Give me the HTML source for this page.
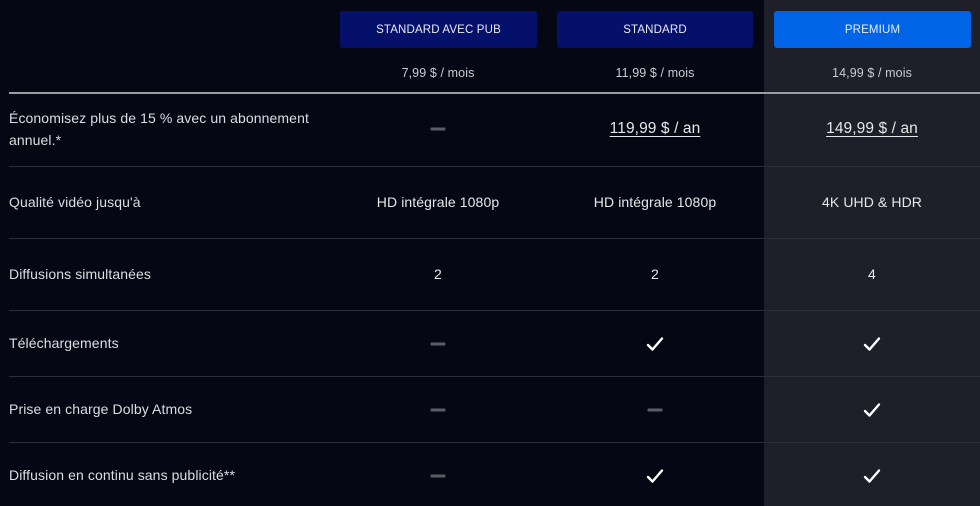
<!DOCTYPE html>
<html><head><meta charset="utf-8"><style>
*{margin:0;padding:0;box-sizing:border-box}
body{width:980px;height:506px;background:#050814;font-family:"Liberation Sans",sans-serif;color:#e6e7ea;position:relative;overflow:hidden}
.prem{position:absolute;left:764px;top:0;width:216px;height:506px;background:#1e1f28}
.btn{position:absolute;top:11px;height:37px;border-radius:3px;background:#04106a;color:#e8eaf5;font-size:11.5px;letter-spacing:.15px;display:flex;align-items:center;justify-content:center;padding-top:1px}
.t{position:absolute;transform:translate(-50%,-50%);font-size:14px;white-space:nowrap;letter-spacing:.1px}
.l{position:absolute;left:9px;font-size:14px;line-height:22px;color:#dcdde2;letter-spacing:.1px}
.hl{position:absolute;left:9px;right:0;height:1px;background:#2b2d38}
.d{position:absolute;width:15px;height:3px;background:#5a5c66;border-radius:1px;transform:translate(-50%,-50%)}
.c{position:absolute;transform:translate(-50%,-50%)}
u{text-underline-offset:3px}
</style></head><body>
<div class="prem"></div>
<div class="btn" style="left:340px;width:197px">STANDARD AVEC PUB</div>
<div class="btn" style="left:557px;width:196px">STANDARD</div>
<div class="btn" style="left:774px;width:197px;background:#0064e6">PREMIUM</div>
<div class="t" style="left:438px;top:73px;font-size:12.5px;color:#c9cbd1">7,99 $ / mois</div>
<div class="t" style="left:655px;top:73px;font-size:12.5px;color:#c9cbd1">11,99 $ / mois</div>
<div class="t" style="left:872px;top:73px;font-size:12.5px;color:#c9cbd1">14,99 $ / mois</div>
<div class="hl" style="top:92px;height:2px;background:#9a9ca4"></div>
<div class="l" style="top:107px">Économisez plus de 15 % avec un abonnement<br>annuel.*</div>
<div class="d" style="left:438px;top:129px"></div>
<div class="t" style="left:655px;top:129px;font-size:15.5px"><u>119,99 $ / an</u></div>
<div class="t" style="left:872px;top:129px;font-size:15.5px"><u>149,99 $ / an</u></div>
<div class="hl" style="top:166px"></div>
<div class="l" style="top:191px">Qualité vidéo jusqu'à</div>
<div class="t" style="left:438px;top:202px">HD intégrale 1080p</div>
<div class="t" style="left:655px;top:202px">HD intégrale 1080p</div>
<div class="t" style="left:872px;top:202px">4K UHD &amp; HDR</div>
<div class="hl" style="top:238px"></div>
<div class="l" style="top:263px">Diffusions simultanées</div>
<div class="t" style="left:438px;top:274px">2</div>
<div class="t" style="left:655px;top:274px">2</div>
<div class="t" style="left:872px;top:274px">4</div>
<div class="hl" style="top:310px"></div>
<div class="l" style="top:332px">Téléchargements</div>
<div class="d" style="left:438px;top:344px"></div>
<svg class="c" style="left:655px;top:344px" width="18" height="16" viewBox="0 0 18 16"><path d="M2 9l4.5 4.5L16 2.5" fill="none" stroke="#fff" stroke-width="2.4" stroke-linecap="round" stroke-linejoin="round"/></svg>
<svg class="c" style="left:872px;top:344px" width="18" height="16" viewBox="0 0 18 16"><path d="M2 9l4.5 4.5L16 2.5" fill="none" stroke="#fff" stroke-width="2.4" stroke-linecap="round" stroke-linejoin="round"/></svg>
<div class="hl" style="top:376px"></div>
<div class="l" style="top:398px">Prise en charge Dolby Atmos</div>
<div class="d" style="left:438px;top:410px"></div>
<div class="d" style="left:655px;top:410px"></div>
<svg class="c" style="left:872px;top:410px" width="18" height="16" viewBox="0 0 18 16"><path d="M2 9l4.5 4.5L16 2.5" fill="none" stroke="#fff" stroke-width="2.4" stroke-linecap="round" stroke-linejoin="round"/></svg>
<div class="hl" style="top:442px"></div>
<div class="l" style="top:464px">Diffusion en continu sans publicité**</div>
<div class="d" style="left:438px;top:476px"></div>
<svg class="c" style="left:655px;top:476px" width="18" height="16" viewBox="0 0 18 16"><path d="M2 9l4.5 4.5L16 2.5" fill="none" stroke="#fff" stroke-width="2.4" stroke-linecap="round" stroke-linejoin="round"/></svg>
<svg class="c" style="left:872px;top:476px" width="18" height="16" viewBox="0 0 18 16"><path d="M2 9l4.5 4.5L16 2.5" fill="none" stroke="#fff" stroke-width="2.4" stroke-linecap="round" stroke-linejoin="round"/></svg>
</body></html>
